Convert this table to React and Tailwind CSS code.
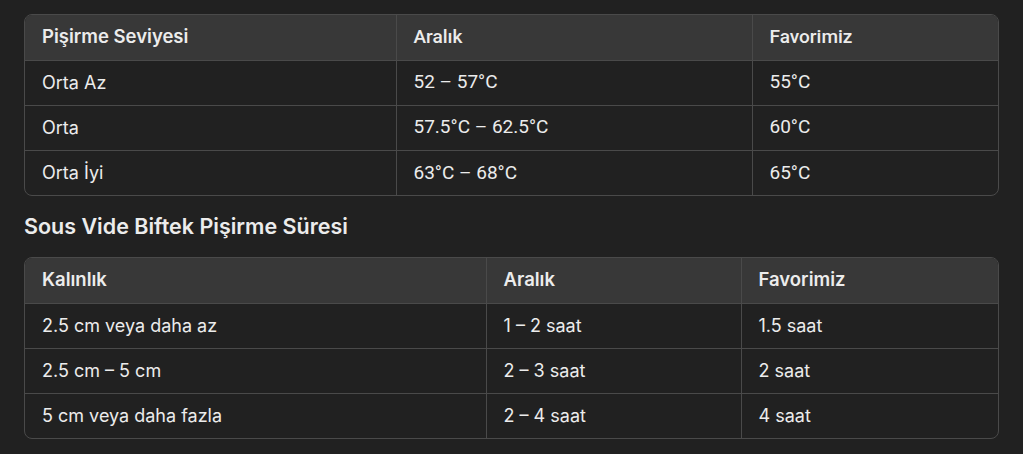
const LEVELS = [
  ['Orta Az', '52 – 57°C', '55°C'],
  ['Orta', '57.5°C – 62.5°C', '60°C'],
  ['Orta İyi', '63°C – 68°C', '65°C'],
];

const TIMES = [
  ['2.5 cm veya daha az', '1 – 2 saat', '1.5 saat'],
  ['2.5 cm – 5 cm', '2 – 3 saat', '2 saat'],
  ['5 cm veya daha fazla', '2 – 4 saat', '4 saat'],
];

const inter = { fontFamily: 'Inter, "Noto Sans", sans-serif' };

function DataTable({ head, rows, widths, headFont, numFont }) {
  return (
    <div className="border border-[#4a4a4a] rounded-lg overflow-hidden">
      <table className="w-full table-fixed border-collapse text-[18px] text-[#ececec]">
        <colgroup>
          {widths.map((w, i) => (
            <col key={i} className={w} />
          ))}
        </colgroup>
        <thead>
          <tr className="bg-[#383838] h-[45px]">
            {head.map((h, i) => {
              const roboto = i > 0 && headFont;
              return (
                <th
                  key={h}
                  style={roboto ? { fontFamily: 'Roboto, sans-serif', fontSize: '19px' } : undefined}
                  className={`text-left ${roboto ? 'font-medium' : 'font-semibold'} text-[18.5px] pl-[17px] border-b border-[#4a4a4a] ${i < 2 ? 'border-r' : ''}`}
                >
                  {h}
                </th>
              );
            })}
          </tr>
        </thead>
        <tbody>
          {rows.map((r, ri) => (
            <tr key={ri} className="h-[45px]">
              {r.map((c, i) => (
                <td
                  key={i}
                  style={i > 0 && numFont ? { fontFamily: 'Roboto, sans-serif', fontSize: '19px' } : undefined}
                  className={`pl-[17px] border-[#4a4a4a] ${i < 2 ? 'border-r' : ''} ${ri < rows.length - 1 ? 'border-b' : ''}`}
                >
                  {c}
                </td>
              ))}
            </tr>
          ))}
        </tbody>
      </table>
    </div>
  );
}

export default function App() {
  return (
    <div className="min-h-[454px] w-[1023px] bg-[#212121] px-6 pt-[14px]" style={inter}>
      <DataTable
        head={['Pişirme Seviyesi', 'Aralık', 'Favorimiz']}
        rows={LEVELS}
        widths={['w-[371px]', 'w-[356px]', 'w-auto']}
        headFont
        numFont
      />
      <h3 className="text-[21.5px] font-semibold text-[#ececec] mt-[17px] mb-[18px] leading-[26px]">
        Sous Vide Biftek Pişirme Süresi
      </h3>
      <DataTable
        head={['Kalınlık', 'Aralık', 'Favorimiz']}
        rows={TIMES}
        widths={['w-[461px]', 'w-[255px]', 'w-auto']}
      />
    </div>
  );
}
